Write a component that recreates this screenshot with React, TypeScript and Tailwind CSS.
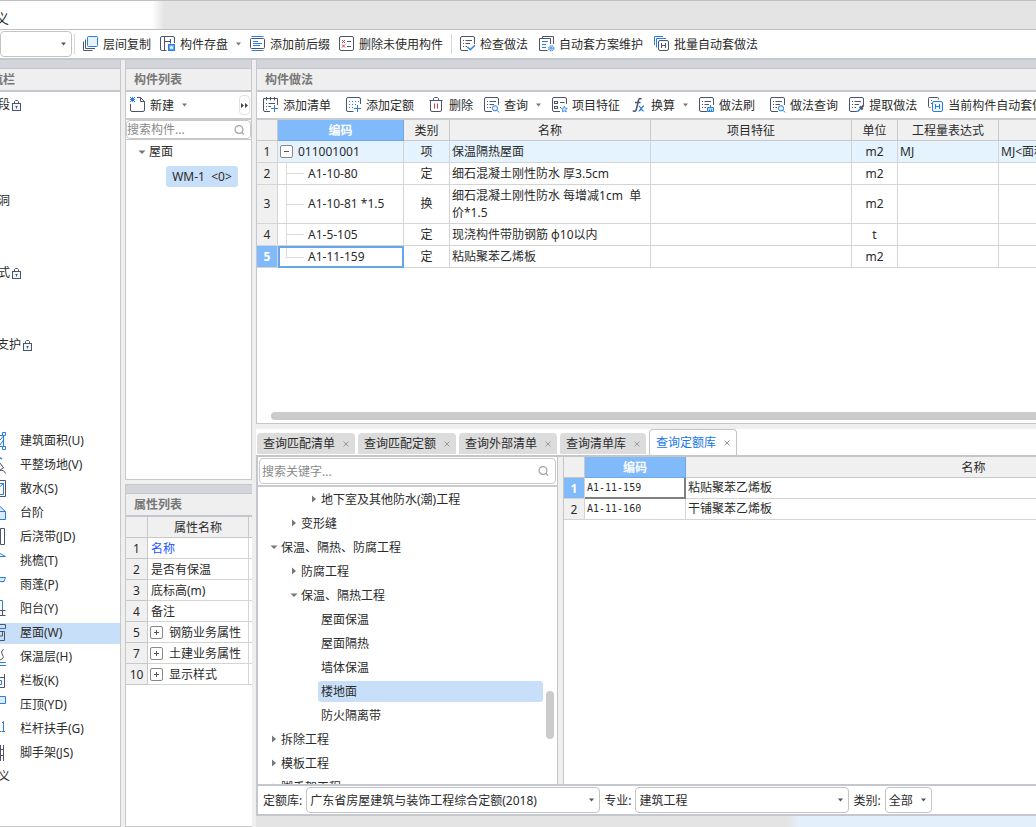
import React from 'react'

const DARK = '#50546a'
const BLUE = '#2a7de1'

function Icon({ children }: { children: React.ReactNode }) {
  return (
    <svg width="16" height="16" viewBox="0 0 16 16" fill="none" stroke={DARK} strokeWidth="1" className="shrink-0" aria-hidden="true">
      {children}
    </svg>
  )
}

// sheet with list lines, the lower right corner stays open for a badge
function Sheet() {
  return <path d="M14.5 8V2q0-1.5-1.5-1.5H2Q.5.5.5 2v11q0 1.5 1.5 1.5h6M3 4.5h1M5.5 4.5H12M3 7.5h1M5.5 7.5H10M3 10.5h1M5.5 10.5H7" />
}

const icons = {
  copy: (
    <Icon>
      <rect x="4.5" y=".5" width="10" height="10" rx="1" fill="#e6f2ff" stroke={BLUE} />
      <path d="M2.5 3.5v9H12M.5 5.5v9h9" />
    </Icon>
  ),
  store: (
    <Icon>
      <path d="M6.5 14.5H2Q.5 14.5.5 13V2Q.5.5 2 .5h11q1.500 0 1.500 1.500V7M4.500.5v14M4.500 5.500h6M10.500 3v4.500" />
      <rect x="8.500" y="8.500" width="6" height="6" fill="#5aa0f5" stroke={BLUE} />
      <path d="m11.500 9.300.7 1.300 1.500.2-1.100 1 .3 1.500-1.400-.7-1.400.7.3-1.500-1.100-1 1.500-.2z" fill="#fff" stroke="none" />
    </Icon>
  ),
  affix: (
    <Icon>
      <path d="M1.5.5h12M1.500 14.500h12" stroke={BLUE} />
      <rect x=".5" y="2.500" width="14" height="10" rx="1" />
      <path d="M3 5.500h5M3 7.500h9M3 9.500h7" stroke={BLUE} />
    </Icon>
  ),
  purge: (
    <Icon>
      <rect x=".5" y=".5" width="14" height="14" rx="1.500" />
      <path d="m3 4 3 3M6 4 3 7M3 8.500l3 3M6 8.500l-3 3" stroke="#d9363e" />
      <path d="M8 5.500h4M8 10.500h4" />
    </Icon>
  ),
  check: (
    <Icon>
      <Sheet />
      <path d="m7.500 11 2.800 2.700 4.600-4.400" stroke={BLUE} strokeWidth="1.500" />
    </Icon>
  ),
  scheme: (
    <Icon>
      <path d="M3.500 2.500v-2h11V8M8.500 14.500h-8v-12h11V8" />
      <path d="M3 5.500h6M3 8.500h4M3 11.500h4" stroke={BLUE} />
      <circle cx="12.300" cy="12.300" r="2.600" fill="#bcdafc" stroke={BLUE} strokeDasharray="1.400 .7" />
      <circle cx="12.300" cy="12.300" r=".9" stroke={BLUE} strokeWidth=".8" />
    </Icon>
  ),
  batch: (
    <Icon>
      <path d="M.5 9V.5H9M2.500 11.500v-9H12" stroke={BLUE} />
      <rect x="4.500" y="4.500" width="10" height="10" rx="1.500" />
      <path d="M7.500 7v5M11.500 7v5M7.500 9.500h4" />
    </Icon>
  ),
  addList: (
    <Icon>
      <path d="M7 14.500H2Q.5 14.500.5 13V1.500h14V8M3.500 0v3.500M7.500 0v3.500M11.500 0v3.500M3 6.500h1M5.500 6.500H12M3 9.500h1M5.500 9.500H8M3 12.500h1" />
      <path d="M11.500 8v7M8 11.500h7" stroke={BLUE} />
    </Icon>
  ),
  addQuota: (
    <Icon>
      <path d="M14.500 7V2q0-1.500-1.500-1.500H2Q.5.5.5 2v11q0 1.500 1.500 1.500h5.500" />
      <path d="M3 4.500h1M6 4.500h1M9 4.500h1M12 4.500h1M3 7.500h1M6 7.500h1M9 7.500h1M3 10.500h1M6 10.500h1M11.500 8v7M8 11.500h7" stroke={BLUE} />
    </Icon>
  ),
  trash: (
    <Icon>
      <path d="M.5 3.500h13M4.500 3.500v-2l1-1h3l1 1v2M1.500 3.500V13q0 1.500 1.500 1.500h8q1.500 0 1.500-1.500V3.500" />
      <path d="M5.500 6.500v5M8.500 6.500v5" stroke="#d9363e" />
    </Icon>
  ),
  query: (
    <Icon>
      <Sheet />
      <circle cx="11" cy="11.300" r="2.600" fill="#e6f2ff" stroke={BLUE} />
      <path d="m13 13.300 2.200 2.200" stroke={BLUE} />
    </Icon>
  ),
  feature: (
    <Icon>
      <path d="M14.500 7V2q0-1.500-1.500-1.500H2Q.5.5.5 2v11q0 1.500 1.500 1.500h6M8 5.500h4.500M8 10.500h1" />
      <rect x="2.500" y="4.500" width="3" height="2" />
      <rect x="2.500" y="9.500" width="3" height="2" />
      <path d="m12.300 9.200.9 1.900 2.100.3-1.500 1.400.4 2.100-1.900-1-1.900 1 .4-2.100-1.500-1.400 2.100-.3z" fill="#d6e9ff" stroke={BLUE} strokeWidth=".8" />
    </Icon>
  ),
  fx: (
    <Icon>
      <path d="M10.500 2.200C8.900.6 7.800 1.600 7.300 4L5.600 11.500c-.5 2.600-1.800 3.600-3.900 2.200M4 5.500h5.500" strokeWidth="1.500" />
      <path d="M7.700 9.200c2-.5 2.700 5.600 5 4.700M13 9c-2-.2-3.200 5.200-5.400 5" stroke={BLUE} strokeWidth="1.300" />
    </Icon>
  ),
  brush: (
    <Icon>
      <Sheet />
      <path d="M8.500 14.500v-4h6v4zM11.500 10.500V8M10.500 14.500v-2M12.500 14.500v-2" fill="#bcdafc" stroke={BLUE} />
    </Icon>
  ),
  extract: (
    <Icon>
      <Sheet />
      <path d="m8.500 14.800 3.500-3.700" stroke={BLUE} strokeWidth="1.500" />
      <path d="m10.700 9.500 3 3M12.200 10.900l2.500-2.600" strokeWidth="2" />
    </Icon>
  ),
  current: (
    <Icon>
      <path d="M2.500 10.500h-1q-1 0-1-1v-8q0-1 1-1h8q1 0 1 1v1M3 3.500h1M3 6.500h1" />
      <rect x="4.500" y="4.500" width="10" height="10" rx="1.500" fill="#eef6ff" stroke={BLUE} />
      <path d="M7.500 7v5M11.500 7v5M7.500 9.500h4" stroke={BLUE} />
    </Icon>
  ),
  newDoc: (
    <Icon>
      <path d="M7 .5h3.500l4 4V13q0 1.500-1.500 1.500H2Q.5 14.500.5 13V7M10.500.5v4h4" />
      <path d="m0 0 5 5M5 0 0 5M2.500 0v5M0 2.500h5" stroke={BLUE} />
    </Icon>
  ),
}

function Caret({ side = false }: { side?: boolean }) {
  return (
    <svg width="8" height="8" viewBox="0 0 8 8" fill="#777" className="shrink-0" aria-hidden="true">
      {side ? <path d="M2 .5 6 4 2 7.5z" /> : <path d="M.5 2.500h7L4 6z" />}
    </svg>
  )
}

function DropMark() {
  return (
    <svg width="5" height="4" viewBox="0 0 5 4" fill="#777" className="ml-1 shrink-0" aria-hidden="true">
      <path d="M0 .5h5L2.500 3.500z" />
    </svg>
  )
}

function Glass() {
  return (
    <svg width="12" height="12" viewBox="0 0 12 12" fill="none" stroke="#a0a0a0" strokeWidth="1.200" className="shrink-0" aria-hidden="true">
      <circle cx="6" cy="5.500" r="3.900" />
      <path d="m8.800 8.300 2.200 2.200" />
    </svg>
  )
}

function Lock() {
  return (
    <svg width="11" height="12" viewBox="0 0 11 12" fill="none" stroke={DARK} className="ml-px shrink-0" aria-hidden="true">
      <rect x="1.500" y="4.500" width="8" height="7" fill="#eef4fb" />
      <path d="M3.500 4V2.500l1-1h2l1 1V4M5.500 7v2.500M4.500 7.500h2" />
    </svg>
  )
}

type Tool = { icon: React.ReactNode; label: string; menu?: boolean; wide?: boolean }

function ToolButton({ icon, label, menu, wide }: Tool) {
  return (
    <button type="button" className={`flex shrink-0 items-center gap-1 ${wide ? 'pr-1' : ''}`}>
      {icon}
      <span className="pt-0.5">{label}</span>
      {menu && <DropMark />}
    </button>
  )
}

const mainTools: Tool[] = [
  { icon: icons.copy, label: '层间复制' },
  { icon: icons.store, label: '构件存盘', menu: true },
  { icon: icons.affix, label: '添加前后缀' },
  { icon: icons.purge, label: '删除未使用构件' },
]

const checkTools: Tool[] = [
  { icon: icons.check, label: '检查做法' },
  { icon: icons.scheme, label: '自动套方案维护' },
  { icon: icons.batch, label: '批量自动套做法' },
]

const methodTools: Tool[] = [
  { icon: icons.addList, label: '添加清单', wide: true },
  { icon: icons.addQuota, label: '添加定额', wide: true },
  { icon: icons.trash, label: '删除' },
  { icon: icons.query, label: '查询', menu: true },
  { icon: icons.feature, label: '项目特征' },
  { icon: icons.fx, label: '换算', menu: true },
  { icon: icons.brush, label: '做法刷', wide: true },
  { icon: icons.query, label: '做法查询' },
  { icon: icons.extract, label: '提取做法' },
  { icon: icons.current, label: '当前构件自动套做法' },
]

const components = [
  { label: '建筑面积(U)', art: <><path d="M0 3.500h3.500v11H0M0 8l3.500-4M0 13l3.500-5" stroke={BLUE} /><path d="M2.500.5h3v3h-3zM2.500 14.500h3v3h-3z" fill="#fff" stroke={BLUE} /></> },
  { label: '平整场地(V)', art: <><path d="M0 1.500 2 3" stroke={BLUE} strokeWidth="1.500" /><path d="m0 7 3.500 5L0 14M0 14.500q4-1 5.500 3" /></> },
  { label: '散水(S)', art: <><path d="M0 .5h5.500v16H0" /><path d="M0 3.500h3.500v11H0M0 6.500l3.500-3" stroke={BLUE} /></> },
  { label: '台阶', art: <path d="M0 2.500 5.500 7.500v8H0M0 7.500h5.500" fill="#dcecff" stroke={BLUE} /> },
  { label: '后浇带(JD)', art: <path d="M.5.5h4v16h-4z" /> },
  { label: '挑檐(T)', art: <path d="M0 1.500 5.500 4.500H0" stroke={BLUE} /> },
  { label: '雨蓬(P)', art: <path d="M0 1.500h5.500L4 5.500H0" fill="#dcecff" stroke={BLUE} /> },
  { label: '阳台(Y)', art: <><path d="M0 .5h2.500v10H0" stroke={BLUE} /><path d="M0 10.500h5.500M0 15.500h5.500M2.500 10.500v5" /></> },
  { label: '屋面(W)', art: <><path d="M0 .5h5.500v4H0M0 7.500h4.500v9H0M2.500 8v4H0" /><path d="M0 4.500h5" stroke={BLUE} /></> },
  { label: '保温层(H)', art: <><path d="M3.500 1Q0 4 2.500 7T0 12" /><path d="M0 14.500h6M0 17.500h6" stroke={BLUE} /></> },
  { label: '栏板(K)', art: <><path d="M4.500 2v13.500H0M0 5.500h4.500" /><path d="M0 8.500h1.500v4H0" stroke={BLUE} /></> },
  { label: '压顶(YD)', art: <path d="M0 .5h5.500v7H0" fill="#dcecff" stroke={BLUE} /> },
  { label: '栏杆扶手(G)', art: <path d="M0 11.500h1.500M2 3l1.500-1.500v10M2 11.500h3" stroke={BLUE} /> },
  { label: '脚手架(JS)', art: <path d="M.5 1v16M3.500 1v16M0 5.500h4M0 11.500h4" /> },
]

const methodRows = [
  { code: 'A1-10-80', kind: '定', name: '细石混凝土刚性防水 厚3.5cm', unit: 'm2' },
  { code: 'A1-10-81 *1.5', kind: '换', name: '细石混凝土刚性防水 每增减1cm\u00a0 单价*1.5', unit: 'm2' },
  { code: 'A1-5-105', kind: '定', name: '现浇构件带肋钢筋 φ10以内', unit: 't' },
  { code: 'A1-11-159', kind: '定', name: '粘贴聚苯乙烯板', unit: 'm2' },
]

const properties = [
  { no: 1, label: '名称', link: true },
  { no: 2, label: '是否有保温' },
  { no: 3, label: '底标高(m)' },
  { no: 4, label: '备注' },
  { no: 5, label: '钢筋业务属性', group: true },
  { no: 7, label: '土建业务属性', group: true },
  { no: 10, label: '显示样式', group: true },
]

const indents = ['pl-3', 'pl-8', 'pl-[52px]']

const quotaTree = [
  { label: '地下室及其他防水(潮)工程', depth: 2, caret: 'side' },
  { label: '变形缝', depth: 1, caret: 'side' },
  { label: '保温、隔热、防腐工程', depth: 0, caret: 'down' },
  { label: '防腐工程', depth: 1, caret: 'side' },
  { label: '保温、隔热工程', depth: 1, caret: 'down' },
  { label: '屋面保温', depth: 2 },
  { label: '屋面隔热', depth: 2 },
  { label: '墙体保温', depth: 2 },
  { label: '楼地面', depth: 2, selected: true },
  { label: '防火隔离带', depth: 2 },
  { label: '拆除工程', depth: 0, caret: 'side' },
  { label: '模板工程', depth: 0, caret: 'side' },
  { label: '脚手架工程', depth: 0, caret: 'side' },
]

const tabs = ['查询匹配清单', '查询匹配定额', '查询外部清单', '查询清单库', '查询定额库']

// the left part of the label runs off the window edge
function ClippedText({ children, width }: { children: string; width: string }) {
  return <span className={`flex shrink-0 justify-end overflow-hidden whitespace-nowrap ${width}`}>{children}</span>
}

function PanelTitle({ children, clipped = false }: { children: string; clipped?: boolean }) {
  return (
    <div className="shrink-0">
      <div className="h-[9px] border-b border-[#c4c8ce] bg-[#d3d5da]" />
      <h2 className={`flex h-[23px] items-center border-b-2 border-[#c4c8ce] bg-[#efefef] font-bold text-[#777] ${clipped ? '' : 'px-2'}`}>
        {clipped ? <ClippedText width="w-[15px]">{children}</ClippedText> : children}
      </h2>
    </div>
  )
}

function ExpandBox({ open = false }: { open?: boolean }) {
  return (
    <button type="button" aria-label={open ? '折叠' : '展开'} className="flex size-[13px] shrink-0 items-center justify-center rounded-xs border border-[#888] bg-white">
      <svg width="7" height="7" viewBox="0 0 7 7" stroke="#555" aria-hidden="true">
        <path d={open ? 'M1 3.5h5' : 'M1 3.5h5M3.5 1v5'} />
      </svg>
    </button>
  )
}

function SelectBox({ id, value, width }: { id: string; value: string; width: string }) {
  return (
    <div className={`relative shrink-0 ${width}`}>
      <select id={id} aria-label={id === 'floor' ? '楼层' : undefined} className="h-[26px] w-full appearance-none rounded border border-[#c4c4c4] bg-white pt-0.5 pr-3 pl-[3px]">
        <option>{value}</option>
      </select>
      <svg width="5" height="4" viewBox="0 0 5 4" fill="#555" className="pointer-events-none absolute top-[11px] right-[6px]" aria-hidden="true">
        <path d="M0 .5h5L2.500 3.500z" />
      </svg>
    </div>
  )
}

function SearchBox({ placeholder, className }: { placeholder: string; className: string }) {
  return (
    <label className={`flex items-center rounded border border-[#c8c8c8] bg-white ${className}`}>
      <input type="search" aria-label={placeholder} placeholder={placeholder} className="min-w-0 flex-1 pt-px outline-none placeholder:text-[#8a8a8a]" />
      <Glass />
    </label>
  )
}

function Navigation() {
  return (
    <nav className="flex w-[121px] shrink-0 flex-col border-r border-b border-[#c8c8c8] bg-white">
      <PanelTitle clipped>导航栏</PanelTitle>
      <ul className="pt-px leading-6">
        <li className="mb-[72px] flex h-6 items-center"><ClippedText width="w-[10px]">段</ClippedText><Lock /></li>
        <li className="mb-12 flex h-6 items-center"><ClippedText width="w-[10px]">洞</ClippedText></li>
        <li className="mb-12 flex h-6 items-center"><ClippedText width="w-[10px]">式</ClippedText><Lock /></li>
        <li className="mb-[72px] flex h-6 items-center"><ClippedText width="w-[21px]">支护</ClippedText><Lock /></li>
        {components.map((item) => (
          <li key={item.label} className="flex h-6 items-center">
            <a href="#" className={`flex h-[21px] flex-1 items-center gap-[13px] ${item.label === '屋面(W)' ? 'bg-[#c8dffa]' : ''}`}>
              <svg width="7" height="18" viewBox="0 0 7 18" fill="none" stroke={DARK} aria-hidden="true">
                {item.art}
              </svg>
              {item.label}
            </a>
          </li>
        ))}
        <li className="flex h-6 items-center"><ClippedText width="w-[10px]">义</ClippedText></li>
      </ul>
    </nav>
  )
}

function ComponentList() {
  return (
    <section className="flex h-[420px] shrink-0 flex-col border-x border-b border-[#c8c8c8] bg-white">
      <PanelTitle>构件列表</PanelTitle>
      <div className="flex h-7 shrink-0 items-center justify-between border-b-2 border-[#c8cacd] pr-px pl-1">
        <ToolButton icon={icons.newDoc} label="新建" menu />
        <button type="button" aria-label="更多" className="flex h-5 w-[11px] items-center justify-center rounded border border-[#e2e2e2]">
          <svg width="7" height="5" viewBox="0 0 7 5" fill="#444" className="shrink-0" aria-hidden="true">
            <path d="M0 0l3 2.500L0 5zM4 0l3 2.500L4 5z" />
          </svg>
        </button>
      </div>
      <SearchBox placeholder="搜索构件..." className="h-[19px] shrink-0 pr-[5px]" />
      <div className="flex-1 border-t border-[#c8c8c8] pl-3 leading-6">
        <div className="flex items-center gap-[3px]"><Caret />屋面</div>
        <button type="button" className="mt-0.5 ml-7 flex h-[21px] w-[72px] items-center justify-center rounded-[3px] bg-[#c8dffa] whitespace-pre">{'WM-1  <0>'}</button>
      </div>
    </section>
  )
}

function PropertyList() {
  return (
    <section className="flex min-h-0 flex-1 flex-col border border-r-0 border-[#c8c8c8] bg-white">
      <PanelTitle>属性列表</PanelTitle>
      <table className="w-full table-fixed border-separate border-spacing-0">
        <colgroup><col className="w-[22px]" /><col className="w-[101px]" /><col /></colgroup>
        <thead>
          <tr className="h-[21px] bg-[#f0f0f0]">
            <th className="border-r border-b border-[#c8c8c8]" />
            <th className="border-r border-b border-[#c8c8c8] pt-0.5 font-normal">属性名称</th>
            <th className="border-b border-[#c8c8c8]" />
          </tr>
        </thead>
        <tbody>
          {properties.map((row) => (
            <tr key={row.no} className="h-[21px]">
              <td className="border-r border-b border-[#c8c8c8] bg-[#f0f0f0] pt-0.5 text-center">{row.no}</td>
              <td className="border-r border-b border-[#d4d4d4]">
                <div className={`flex items-center gap-[6px] ${row.group ? 'pl-0.5' : 'pl-[3px]'} ${row.link ? 'text-[#1a56ff]' : ''}`}>
                  {row.group && <ExpandBox />}
                  <span className="pt-0.5">{row.label}</span>
                </div>
              </td>
              <td className="border-b border-[#d4d4d4]" />
            </tr>
          ))}
        </tbody>
      </table>
    </section>
  )
}

const cell = 'border-r border-b border-[#d4d4d4]'
const headCell = 'border-r border-b border-[#c8c8c8] pt-0.5 font-normal'
const activeHead = 'border-r border-b border-[#6ba7ea] bg-[#80bafb] pt-0.5 font-bold text-white'

function MethodTable() {
  return (
    <table className="w-[943px] table-fixed border-separate border-spacing-0">
      <colgroup>
        <col className="w-[21px]" /><col className="w-[126px]" /><col className="w-[46px]" /><col className="w-[201px]" />
        <col className="w-[201px]" /><col className="w-[46px]" /><col className="w-[101px]" /><col className="w-[201px]" />
      </colgroup>
      <thead>
        <tr className="h-[21px] bg-[#f0f0f0]">
          <th className={headCell} />
          <th className={activeHead}>编码</th>
          <th className={headCell}>类别</th>
          <th className={headCell}>名称</th>
          <th className={headCell}>项目特征</th>
          <th className={headCell}>单位</th>
          <th className={headCell}>工程量表达式</th>
          <th className={headCell} />
        </tr>
      </thead>
      <tbody>
        <tr className="h-[22px] bg-[#e5f3ff]">
          <td className={`${cell} bg-[#f0f0f0] text-center`}>1</td>
          <td className={cell}><div className="flex items-center gap-[5px] pl-0.5"><ExpandBox open />011001001</div></td>
          <td className={`${cell} text-center`}>项</td>
          <td className={`${cell} pl-0.5`}>保温隔热屋面</td>
          <td className={cell} />
          <td className={`${cell} text-center`}>m2</td>
          <td className={`${cell} pl-0.5`}>MJ</td>
          <td className={`${cell} pl-0.5`}>{'MJ<面积>'}</td>
        </tr>
        {methodRows.map((row, i) => {
          const last = i === methodRows.length - 1
          const tall = i === 1
          return (
            <tr key={row.code} className={tall ? 'h-[39px]' : 'h-[22px]'}>
              <td className={`${cell} text-center ${last ? 'bg-[#80bafb] font-bold text-white' : 'bg-[#f0f0f0]'}`}>{i + 2}</td>
              <td className={`${last ? 'border-2 border-[#65a5ea]' : cell} ${tall ? 'h-[39px]' : 'h-[22px]'}`}>
                <div className={`flex h-full items-center gap-1 ${last ? 'pl-[6px]' : 'pl-2'}`}>
                  <span className="flex h-full w-[18px] flex-col">
                    <span className="flex-1 border-b border-l border-[#dcdcdc]" />
                    <span className={`flex-1 ${last ? '' : 'border-l border-[#dcdcdc]'}`} />
                  </span>
                  {row.code}
                </div>
              </td>
              <td className={`${cell} text-center`}>{row.kind}</td>
              <td className={`${cell} pl-0.5 leading-[17px]`}>{row.name}</td>
              <td className={cell} />
              <td className={`${cell} text-center`}>{row.unit}</td>
              <td className={cell} />
              <td className={cell} />
            </tr>
          )
        })}
      </tbody>
    </table>
  )
}

function TabStrip() {
  return (
    <div className="flex h-[28px] shrink-0 items-end gap-[3px] border-b-2 border-[#c5c5c5] bg-white pl-px">
      {tabs.map((tab) => {
        const active = tab === '查询定额库'
        return (
          <div
            key={tab}
            className={`flex shrink-0 items-center gap-2 rounded-t px-[6px] ${active ? 'h-[26px] border border-b-0 border-[#c5c5c5] bg-white text-[#1677e8]' : 'mb-px h-[21px] bg-[#dcdcdc]'}`}
          >
            <button type="button">{tab}</button>
            <button type="button" aria-label="关闭">
              <svg width="6" height="6" viewBox="0 0 6 6" stroke="#999" aria-hidden="true"><path d="m.5.5 5 5M5.500.5l-5 5" /></svg>
            </button>
          </div>
        )
      })}
    </div>
  )
}

function QuotaTree() {
  return (
    <div className="flex w-[300px] shrink-0 flex-col border-r border-[#c5c5c5] bg-white">
      <div className="border-b-2 border-[#c8cacd] p-px">
        <SearchBox placeholder="搜索关键字..." className="h-[26px] pr-[6px] pl-0.5" />
      </div>
      <div className="flex min-h-0 flex-1 overflow-hidden">
        <ul className="flex-1">
          {quotaTree.map((node) => (
            <li key={node.label} className={`flex h-6 items-center ${indents[node.depth]}`}>
              {node.caret && <Caret side={node.caret === 'side'} />}
              {node.caret ? (
                <span className="pt-0.5 pl-[3px]">{node.label}</span>
              ) : (
                <span className={`ml-2 flex h-[21px] flex-1 items-center rounded-[3px] pt-0.5 pl-[3px] ${node.selected ? 'bg-[#c8dffa]' : ''}`}>{node.label}</span>
              )}
            </li>
          ))}
        </ul>
        <div className="w-[14px] pt-[204px] pl-[3px]">
          <div className="h-12 w-2 rounded bg-[#cbcbcb]" />
        </div>
      </div>
    </div>
  )
}

function QuotaTable() {
  return (
    <div className="min-w-0 flex-1 overflow-hidden border-l border-[#c5c5c5] bg-white">
      <table className="w-[698px] table-fixed border-separate border-spacing-0">
        <colgroup><col className="w-[21px]" /><col className="w-[101px]" /><col className="w-[576px]" /></colgroup>
        <thead>
          <tr className="h-[21px] bg-[#f0f0f0]">
            <th className={headCell} />
            <th className={activeHead}>编码</th>
            <th className={headCell}>名称</th>
          </tr>
        </thead>
        <tbody>
          <tr className="h-[21px]">
            <td className={`${cell} bg-[#80bafb] pt-0.5 text-center font-bold text-white`}>1</td>
            <td className="border-r-2 border-b-2 border-[#808080] pl-0.5 font-['DejaVu_Sans_Mono',monospace] text-[10px]">A1-11-159</td>
            <td className={`${cell} pl-0.5`}>粘贴聚苯乙烯板</td>
          </tr>
          <tr className="h-[21px]">
            <td className={`${cell} bg-[#f0f0f0] pt-0.5 text-center`}>2</td>
            <td className={`${cell} pl-0.5 font-['DejaVu_Sans_Mono',monospace] text-[10px]`}>A1-11-160</td>
            <td className={`${cell} pl-0.5`}>干铺聚苯乙烯板</td>
          </tr>
        </tbody>
      </table>
    </div>
  )
}

export default function App() {
  return (
    <div className="flex h-screen min-h-[700px] flex-col overflow-hidden bg-[#efefef] font-['Noto_Sans','Noto_Sans_CJK_SC',sans-serif] text-xs leading-4 text-[#2b2b2b]">
      <header className="flex h-[30px] shrink-0 items-center border-y border-[#c0c0c0] bg-[linear-gradient(to_right,#fff_152px,#e4e4e4_164px)] pt-2 text-sm">
        <ClippedText width="w-[9px]">定义</ClippedText>
      </header>

      <div className="flex h-[30px] shrink-0 items-center gap-[10px] overflow-hidden border-b-2 border-[#c4c8ce] bg-white">
        <SelectBox id="floor" value="" width="w-[72px]" />
        <div className="-ml-2 h-5 border-l border-[#d8d8d8]" />
        <div className="-ml-0.5 flex items-center gap-[9px]">
          {mainTools.map((tool) => <ToolButton key={tool.label} {...tool} />)}
        </div>
        <div className="-ml-0.5 h-5 border-l border-[#d8d8d8]" />
        <div className="-ml-0.5 flex items-center gap-[11px]">
          {checkTools.map((tool) => <ToolButton key={tool.label} {...tool} />)}
        </div>
      </div>

      <main className="flex min-h-0 flex-1 gap-1">
        <Navigation />

        <div className="flex w-[127px] shrink-0 flex-col gap-1">
          <ComponentList />
          <PropertyList />
        </div>

        <div className="flex min-w-0 flex-1 flex-col">
          <section className="flex h-[364px] shrink-0 flex-col overflow-hidden border-b border-l border-[#c4c8ce] bg-white">
            <PanelTitle>构件做法</PanelTitle>
            <div className="flex h-7 shrink-0 items-center gap-[11px] overflow-hidden border-b-2 border-[#c8cacd] pl-[6px]">
              {methodTools.map((tool) => <ToolButton key={tool.label} {...tool} />)}
            </div>
            <div className="min-h-0 flex-1 overflow-hidden">
              <MethodTable />
            </div>
            <div className="mb-[3px] ml-[14px] h-2 shrink-0 rounded-l bg-[#cbcbcb]" />
          </section>

          <section className="mt-[5px] flex min-h-0 flex-1 flex-col">
            <TabStrip />
            <div className="flex min-h-0 flex-1 gap-[5px] border-l-2 border-[#c4c8ce]">
              <QuotaTree />
              <QuotaTable />
            </div>
            <footer className="flex h-8 shrink-0 items-center gap-1 overflow-hidden border-y-2 border-l-2 border-[#c4c8ce] bg-white pl-[5px]">
              <label htmlFor="library" className="pt-0.5">定额库:</label>
              <SelectBox id="library" value="广东省房屋建筑与装饰工程综合定额(2018)" width="w-[294px]" />
              <label htmlFor="major" className="pt-0.5">专业:</label>
              <SelectBox id="major" value="建筑工程" width="w-[214px]" />
              <label htmlFor="kind" className="pt-0.5">类别:</label>
              <SelectBox id="kind" value="全部" width="w-[47px]" />
            </footer>
            <div className="h-[11px] shrink-0 bg-[linear-gradient(to_right,#e4e4e4_530px,#e3f0fb_545px)]" />
          </section>
        </div>
      </main>
    </div>
  )
}
